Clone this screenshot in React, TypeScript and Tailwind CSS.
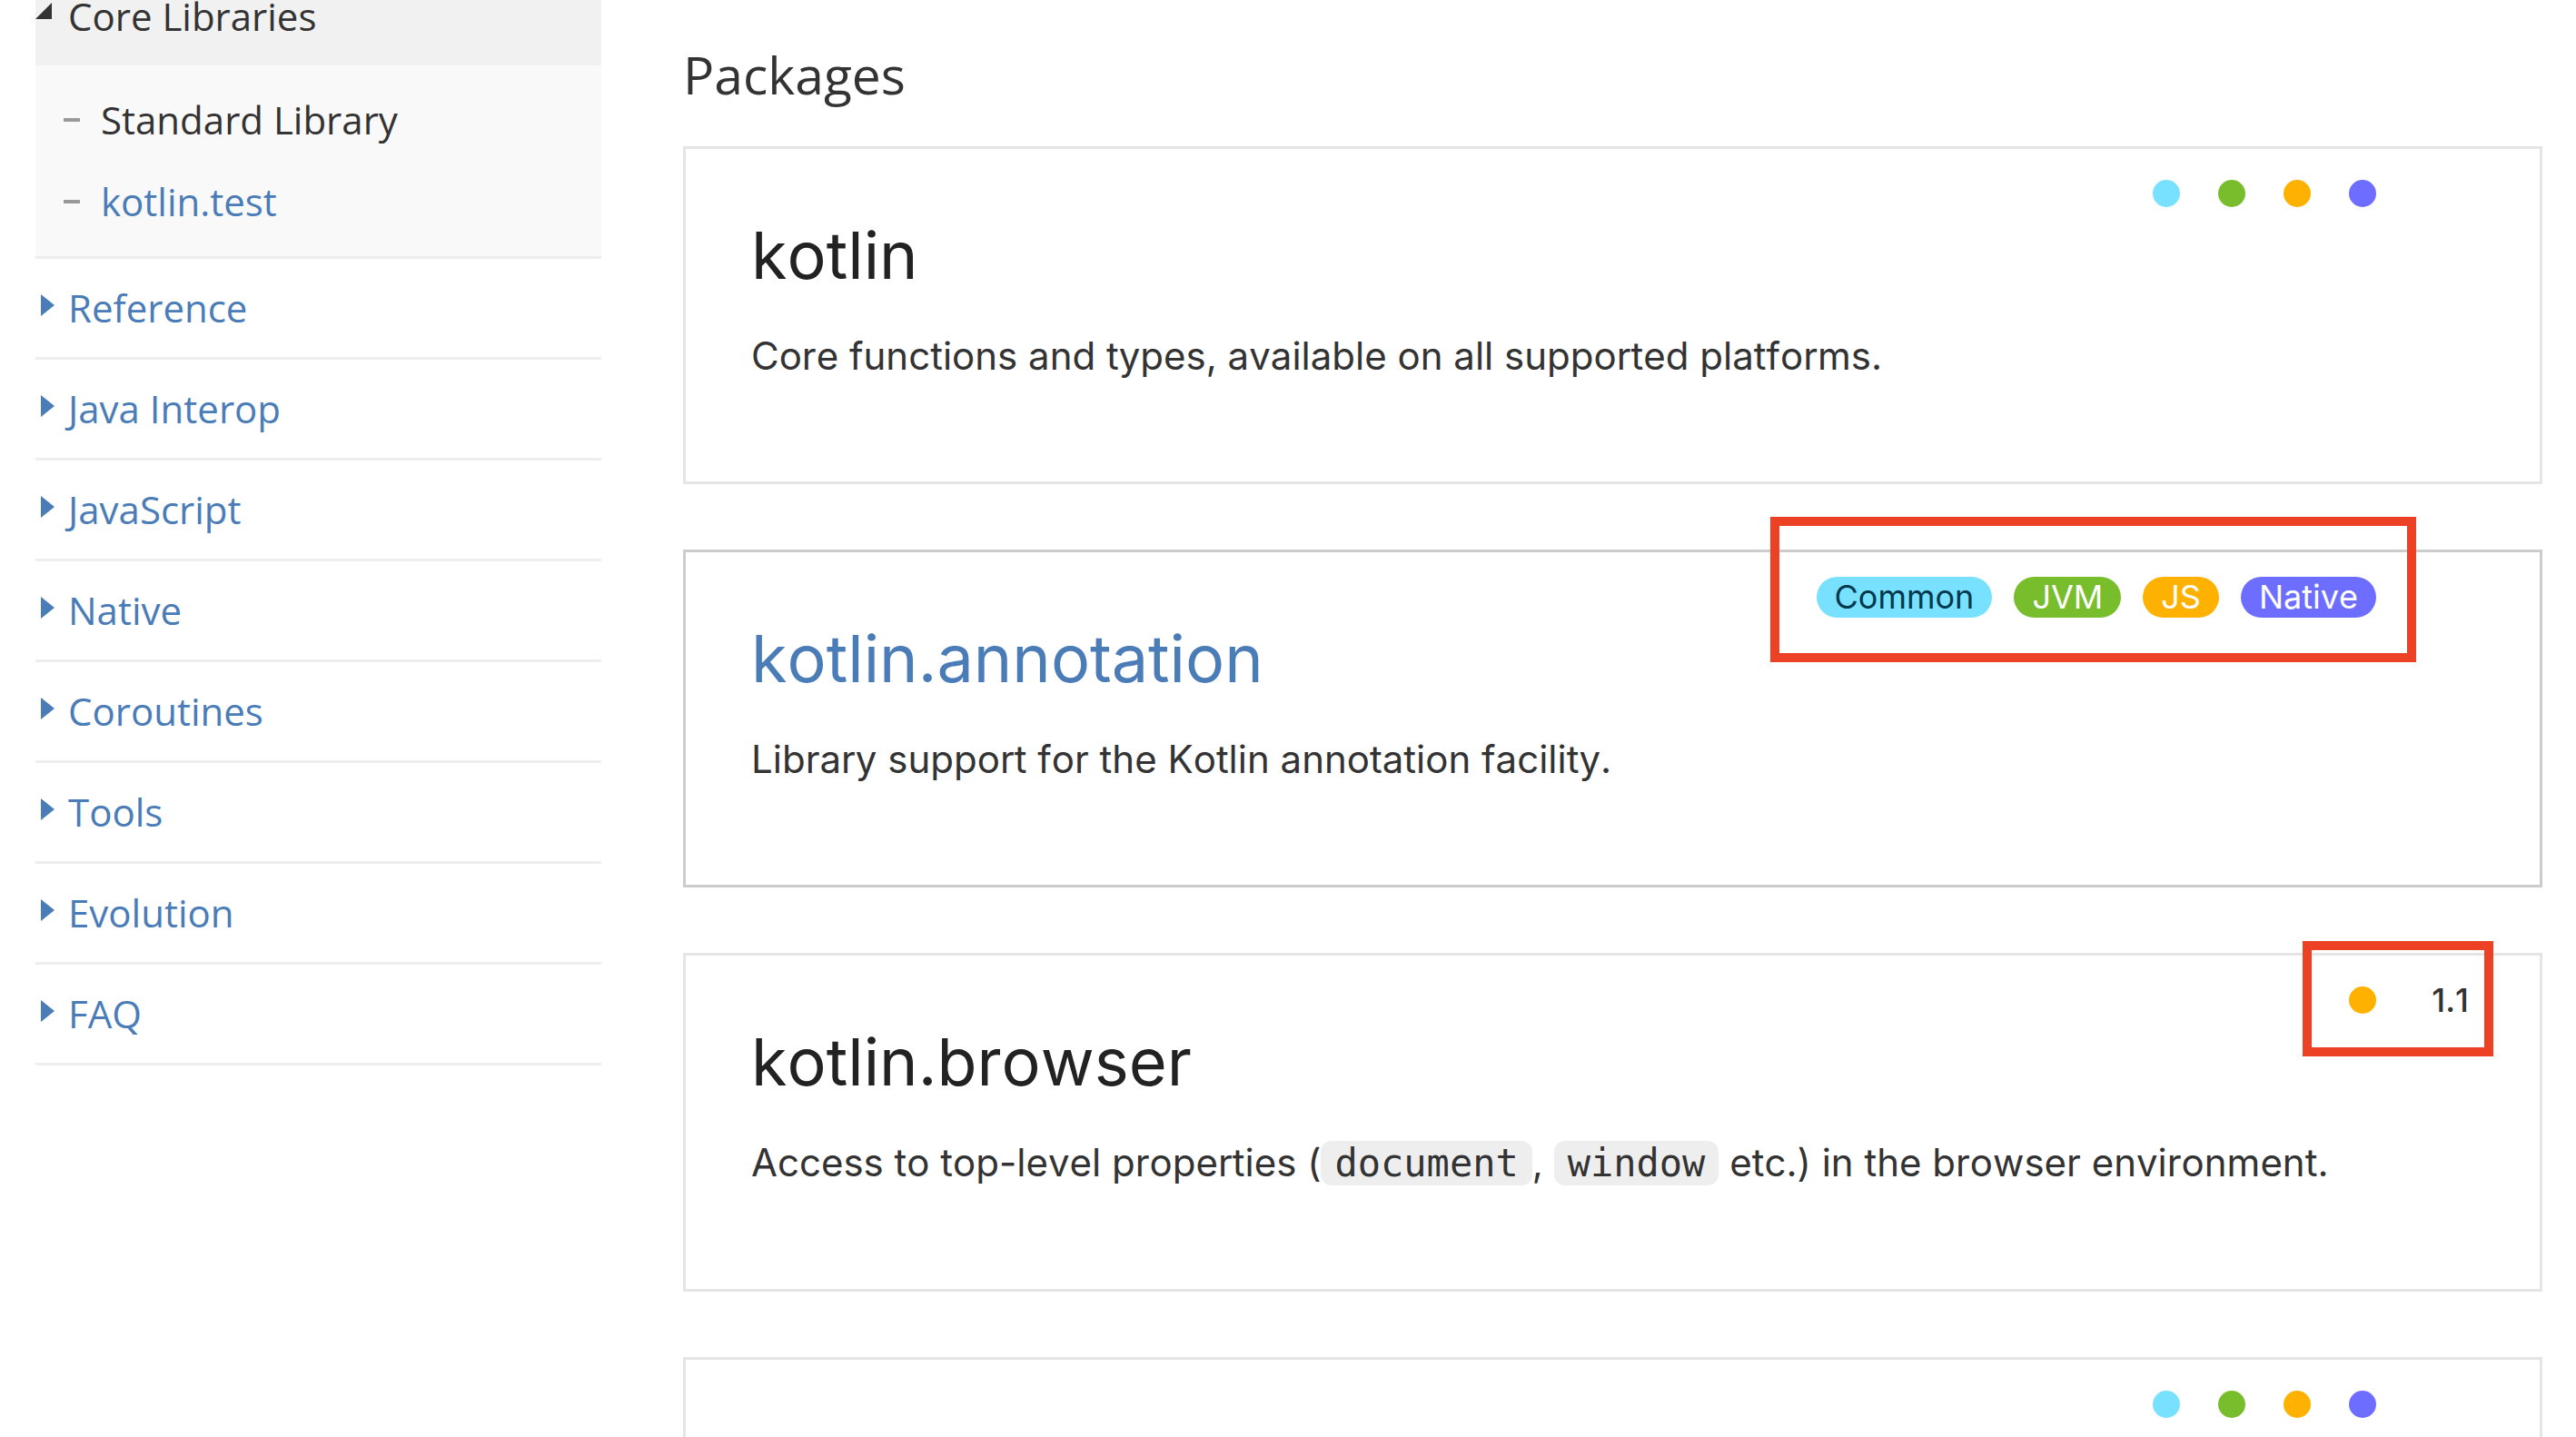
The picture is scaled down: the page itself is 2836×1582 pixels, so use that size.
import type { ReactNode } from "react";

type Platform = "Common" | "JVM" | "JS" | "Native";

const platformColors: Record<Platform, string> = {
  Common: "bg-[#77e1ff] text-[#00394d]",
  JVM: "bg-[#78bd2c] text-white",
  JS: "bg-[#ffb100] text-white",
  Native: "bg-[#6d6dff] text-white",
};

const allPlatforms: Platform[] = ["Common", "JVM", "JS", "Native"];

const sections = [
  "Reference",
  "Java Interop",
  "JavaScript",
  "Native",
  "Coroutines",
  "Tools",
  "Evolution",
  "FAQ",
];

function Dash() {
  return (
    <span className="flex w-[72px] items-center pl-[31px]" aria-hidden="true">
      <span className="h-1 w-[18px] bg-[#999]" />
    </span>
  );
}

function Sidebar() {
  return (
    <nav className="-mt-9 w-[623px] shrink-0 font-['Open_Sans',sans-serif] text-[42px] leading-[60px] text-[#4a7cb8]">
      <button
        type="button"
        aria-expanded="true"
        className="flex w-full items-center gap-[18px] bg-[#f1f1f1] py-6 text-left text-[#333]"
      >
        <svg className="mb-3 size-[18px]" viewBox="0 0 18 18" aria-hidden="true">
          <path d="M18 0V18H0Z" fill="currentColor" />
        </svg>
        Core Libraries
      </button>
      <ul className="border-b-3 border-[#eee] bg-[#f9f9f9] py-[15px] leading-[90px]">
        <li className="flex">
          <Dash />
          <a href="#stdlib" className="text-[#333]">
            Standard Library
          </a>
        </li>
        <li className="flex">
          <Dash />
          <a href="#kotlin-test">kotlin.test</a>
        </li>
      </ul>
      {sections.map((name) => (
        <button
          key={name}
          type="button"
          aria-expanded="false"
          className="flex w-full items-center gap-[15px] border-b-3 border-[#eee] py-6 pl-1.5 text-left"
        >
          <svg className="mb-1.5 h-6 w-[15px]" viewBox="0 0 15 24" aria-hidden="true">
            <path d="M0 0L15 12L0 24Z" fill="currentColor" />
          </svg>
          {name}
        </button>
      ))}
    </nav>
  );
}

function Dot({ platform }: { platform: Platform }) {
  return (
    <span
      role="img"
      aria-label={platform}
      className={`size-[30px] rounded-full ${platformColors[platform]}`}
    />
  );
}

function Pill({ platform }: { platform: Platform }) {
  return (
    <span className={`rounded-full px-5 text-[36px] leading-[45px] ${platformColors[platform]}`}>
      {platform}
    </span>
  );
}

function Code({ children }: { children: ReactNode }) {
  return (
    <code className="rounded-xl bg-[#eee] px-[15px] font-['DejaVu_Sans_Mono',monospace] text-[42px]">
      {children}
    </code>
  );
}

interface CardProps {
  name?: string;
  platforms: Platform[];
  version?: string;
  active?: boolean;
  highlight?: ReactNode;
  children?: ReactNode;
}

function PackageCard({ name, platforms, version, active, highlight, children }: CardProps) {
  return (
    <article
      className={`relative min-h-[372px] border-3 pb-[105px] ${active ? "border-[#ccc]" : "border-[#e5e5e5]"}`}
    >
      <div className="flex items-start justify-end pt-[27px] pr-[78px]">
        <div className={`flex h-[45px] ${active ? "gap-6" : "gap-[42px] pt-[7px]"}`}>
          {platforms.map((p) =>
            active ? <Pill key={p} platform={p} /> : <Dot key={p} platform={p} />,
          )}
        </div>
        <span className="w-[102px] text-right text-[36px] leading-[45px] font-medium">
          {version}
        </span>
      </div>
      {name && (
        <h3 className="px-[72px] text-[72px] leading-[90px] text-[#222]">
          <a href={`#${name}`} className={active ? "text-[#4a7cb8]" : ""}>
            {name}
          </a>
        </h3>
      )}
      {children && <p className="mt-[33px] px-[72px] text-[42px] leading-[66px]">{children}</p>}
      {highlight}
    </article>
  );
}

export default function App() {
  return (
    <div className="flex h-screen gap-[90px] overflow-hidden bg-white pr-[37px] pl-[39px] text-[#333]">
      <Sidebar />
      <main className="min-w-0 flex-1 pt-[46px] font-['Inter',sans-serif] [font-kerning:none] [font-variant-ligatures:none]">
        <h2 className="mb-[43px] font-['Open_Sans',sans-serif] text-[57px] leading-[72px]">
          Packages
        </h2>
        <div className="flex flex-col gap-[72px]">
          <PackageCard name="kotlin" platforms={allPlatforms}>
            Core functions and types, available on all supported platforms.
          </PackageCard>
          <PackageCard
            name="kotlin.annotation"
            platforms={allPlatforms}
            active
            highlight={
              <div className="absolute -top-[39px] right-[136px] h-40 w-[711px] border-10 border-[#ed4126]" />
            }
          >
            Library support for the Kotlin annotation facility.
          </PackageCard>
          <PackageCard
            name="kotlin.browser"
            platforms={["JS"]}
            version="1.1"
            highlight={
              <div className="absolute -top-4 right-[51px] h-[127px] w-[210px] border-10 border-[#ed4126]" />
            }
          >
            Access to top-level properties (<Code>document</Code>, <Code>window</Code> etc.) in the
            browser environment.
          </PackageCard>
          <PackageCard platforms={allPlatforms} />
        </div>
      </main>
    </div>
  );
}
